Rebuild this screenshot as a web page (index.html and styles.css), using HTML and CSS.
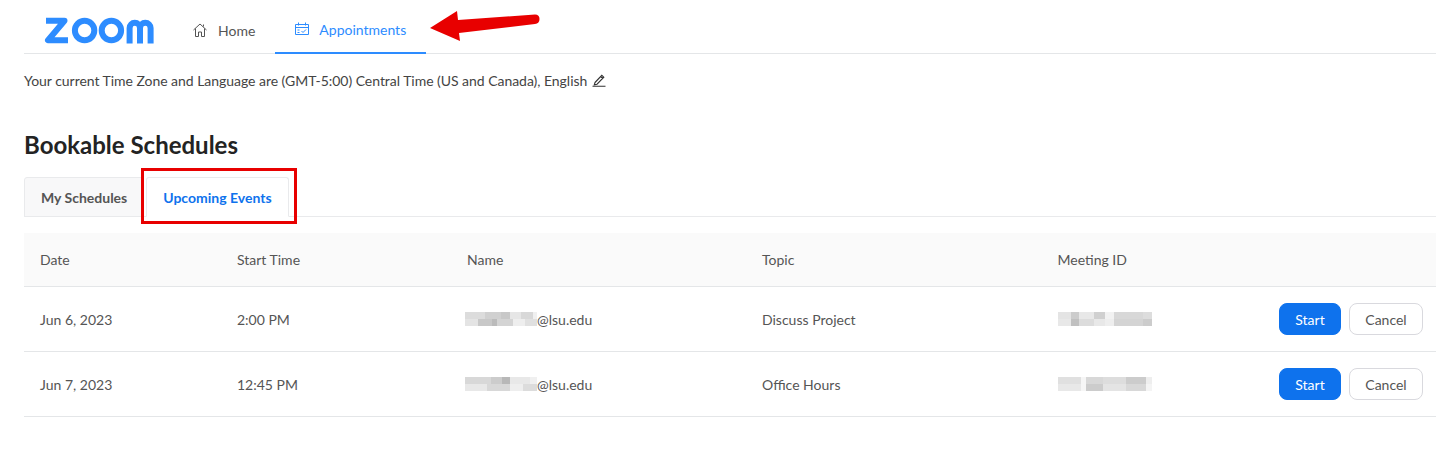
FILE: index.html
```html
<!DOCTYPE html>
<html lang="en">

<head>
  <meta charset="UTF-8">
  <meta name="viewport" content="width=device-width, initial-scale=1.0">
  <title>Appointments</title>
  <link rel="stylesheet" href="styles.css">
</head>

<body>
  <header class="topbar">
    <svg class="logo" width="112" height="27" viewBox="0 0 112 27" aria-label="Zoom">
      <g fill="none" stroke="#2d8cff" stroke-width="6">
        <path d="M2 3.800H20.500L4 23.200H24" stroke-linejoin="round" />
        <circle cx="40.600" cy="13.500" r="9.700" />
        <circle cx="67.400" cy="13.500" r="9.700" />
        <path d="M85.600 26.500V11A5.200 5.200 0 0 1 96 11V26.500M96 11A5.200 5.200 0 0 1 106.600 11V26.500" />
      </g>
    </svg>
    <nav class="nav">
      <a class="nav-item">
        <svg width="14" height="14" viewBox="0 0 14 14" fill="none" stroke="#555" stroke-width="1">
          <path d="M.5 7 7 1l6.500 6M2.500 5.500v8h3V9h3v4.500h3v-8M10.500 3.500V1.500" />
        </svg>
        Home
      </a>
      <a class="nav-item active">
        <svg width="14" height="14" viewBox="0 0 14 14" fill="none" stroke="#2d8cff" stroke-width="1">
          <path d="M.5 2.500h13v10H.5zM.5 5.500h13M3.500 .5v3M10.500 .5v3M2.500 8h2M2.500 10.500h2M6.500 9l1.500 1.500 3-3" />
        </svg>
        Appointments
      </a>
    </nav>
  </header>

  <p class="timezone">
    Your current Time Zone and Language are (GMT-5:00) Central Time (US and Canada), English
    <svg class="edit" width="14" height="14" viewBox="0 0 14 14" fill="none" stroke="#333" stroke-width="1.100">
      <path d="M3 9.500 9.800 2.300l2 1.900L5 11.200l-2.700.5zM8.700 3.500l2 2M.5 13.300h13" />
    </svg>
  </p>

  <h1 class="title">Bookable Schedules</h1>

  <div class="tabs">
    <div class="tab">My Schedules</div>
    <div class="tab selected">Upcoming Events</div>
  </div>

  <div class="table">
    <div class="row head">
      <div>Date</div>
      <div>Start Time</div>
      <div>Name</div>
      <div>Topic</div>
      <div>Meeting ID</div>
      <div></div>
    </div>
    <div class="row">
      <div>Jun 6, 2023</div>
      <div>2:00 PM</div>
      <div class="email"><span class="blur blur-name"></span>@lsu.edu</div>
      <div>Discuss Project</div>
      <div><span class="blur blur-id"></span></div>
      <div class="actions">
        <button class="btn primary">Start</button>
        <button class="btn">Cancel</button>
      </div>
    </div>
    <div class="row">
      <div>Jun 7, 2023</div>
      <div>12:45 PM</div>
      <div class="email"><span class="blur blur-name alt"></span>@lsu.edu</div>
      <div>Office Hours</div>
      <div><span class="blur blur-id alt"></span></div>
      <div class="actions">
        <button class="btn primary">Start</button>
        <button class="btn">Cancel</button>
      </div>
    </div>
  </div>

  <!-- annotations on top of the screenshot -->
  <svg class="arrow" width="112" height="36" viewBox="0 0 112 36">
    <path d="M2 22 29 5l1 9 77-5.500q4.500 0 4.500 4.500t-4.500 5L31 27l1 8z" fill="#e80000" />
  </svg>
  <div class="callout"></div>
</body>

</html>
```

FILE: styles.css
```css
* {
  box-sizing: border-box;
}

body {
  margin: 0;
  padding-left: 24px;
  position: relative;
  background-color: #fff;
  color: #4a4a4f;
  font-family: Lato, "Open Sans", sans-serif;
  font-size: 14px;
}

.topbar {
  display: flex;
  height: 54px;
  border-bottom: 1px solid #e4e6e8;
}

.logo {
  margin: 17px 0 0 20px;
}

.nav {
  display: flex;
  margin-left: 17px;
}

.nav-item {
  display: flex;
  align-items: center;
  gap: 11px;
  height: 54px;
  padding: 6px 20px 0;
  color: #555;
}

.nav-item.active {
  gap: 10px;
  color: #2d8cff;
  border-bottom: 2px solid #2d8cff;
}

.timezone {
  display: flex;
  align-items: center;
  gap: 5px;
  height: 18px;
  margin: 17px 0 0;
  color: #444;
  letter-spacing: -0.035px;
}

.title {
  margin: 40px 0 0;
  color: #232323;
  font-size: 24px;
  font-weight: 700;
  line-height: 32px;
}

.tabs {
  display: flex;
  height: 40px;
  margin-top: 16px;
  border-bottom: 1px solid #e9eaec;
}

.tab {
  height: 40px;
  padding: 11px 16px 0;
  border: 1px solid #e9eaec;
  border-radius: 3px 3px 0 0;
  background-color: #f8f8f9;
  color: #555;
  font-size: 14px;
  font-weight: 700;
}

.tab.selected {
  margin-left: 2px;
  background-color: #fff;
  border-bottom-color: #fff;
  color: #0e72ed;
}

.table {
  margin-top: 16px;
}

.row {
  display: grid;
  grid-template-columns: 197px 230px 295px 295.500px 221.500px 1fr;
  align-items: center;
  height: 65px;
  padding-left: 16px;
  border-bottom: 1px solid #e4e6e8;
  color: #555;
}

.row.head {
  height: 54px;
  background-color: #fafafa;
}

.email {
  display: flex;
  align-items: center;
  margin-left: -2px;
}

/* redacted values: two rows of grey blocks */
.blur {
  display: block;
  height: 14px;
  background-repeat: no-repeat;
  background-size: 100% 50%;
  background-position: top, bottom;
}

.blur-name {
  width: 72px;
  background-image:
    linear-gradient(90deg, #dcdcdc 0 28%, #d0d0d0 28% 50%, #c8c8c8 50% 62%, #e6e6e6 62% 78%, #d8d8d8 78% 94%, #f0f0f0 94%),
    linear-gradient(90deg, #e4e4e4 0 18%, #c8c8c8 18% 38%, #bbb 38% 44%, #d4d4d4 44% 66%, #eee 66% 84%, #e0e0e0 84%);
}

.blur-name.alt {
  background-image:
    linear-gradient(90deg, #d8d8d8 0 36%, #ccc 36% 52%, #b8b8b8 52% 62%, #e8e8e8 62% 90%, #f0f0f0 90%),
    linear-gradient(90deg, #e8e8e8 0 30%, #d8d8d8 30% 62%, #eee 62% 80%, #dcdcdc 80%);
}

.blur-id {
  width: 94px;
  background-image:
    linear-gradient(90deg, #e4e4e4 0 14%, #ccc 14% 22%, #e8e8e8 22% 38%, #d0d0d0 38% 50%, #f2f2f2 50% 60%, #d8d8d8 60% 90%, #ddd 90%),
    linear-gradient(90deg, #e8e8e8 0 14%, #c0c0c0 14% 22%, #dcdcdc 22% 38%, #e8e8e8 38% 50%, #eee 50% 60%, #d4d4d4 60% 90%, #ccc 90%);
}

.blur-id.alt {
  background-image:
    linear-gradient(90deg, #e0e0e0 0 24%, #f6f6f6 24% 30%, #d8d8d8 30% 48%, #ddd 48% 72%, #ccc 72% 94%, #eee 94%),
    linear-gradient(90deg, #e8e8e8 0 24%, #f6f6f6 24% 30%, #ccc 30% 48%, #e4e4e4 48% 72%, #d8d8d8 72% 94%, #f4f4f4 94%);
}

.actions {
  display: flex;
  gap: 8px;
}

.btn {
  width: 74px;
  height: 32px;
  padding: 0;
  border: 1px solid #d9d9de;
  border-radius: 8px;
  background-color: #fff;
  color: #555;
  font-family: inherit;
  font-size: 14px;
}

.btn.primary {
  width: 62px;
  border-color: #0e72ed;
  background-color: #0e72ed;
  color: #fff;
}

.arrow {
  position: absolute;
  left: 428px;
  top: 6px;
}

.callout {
  position: absolute;
  left: 141px;
  top: 168px;
  width: 156px;
  height: 56px;
  border: 3px solid #e80000;
}
```
